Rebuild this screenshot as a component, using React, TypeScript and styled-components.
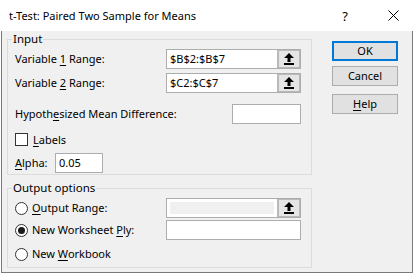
import React from 'react'
import styled, { createGlobalStyle } from 'styled-components'

const GlobalStyle = createGlobalStyle`
  html, body {
    margin: 0;
    padding: 0;
    background: #ffffff;
  }
  body {
    font-family: 'Noto Sans', 'Liberation Sans', sans-serif;
    font-size: 11px;
    color: #000000;
  }
  * {
    box-sizing: border-box;
  }
`

const UploadIcon = () => (
  <svg width='10' height='12' viewBox='0 0 10 12'>
    <path d='M5 0 L10 5 L6.5 5 L6.5 9 L3.5 9 L3.5 5 L0 5 Z' fill='#000' />
    <rect x='0' y='10' width='10' height='2' fill='#000' />
  </svg>
)

const CloseIcon = () => (
  <svg width='11' height='11' viewBox='0 0 11 11'>
    <path d='M0.5 0.5 L10.5 10.5 M10.5 0.5 L0.5 10.5' stroke='#000' strokeWidth='1' />
  </svg>
)

const RefEdit = ({ value }: { value?: string }) => (
  <RefBox>
    <RefText>{value}</RefText>
    <RefButton>
      <UploadIcon />
    </RefButton>
  </RefBox>
)

const App = () => {
  return (
    <>
      <GlobalStyle />
      <TitleBar>
        <Title>t-Test: Paired Two Sample for Means</Title>
        <TitleButton>?</TitleButton>
        <TitleButton $close>
          <CloseIcon />
        </TitleButton>
      </TitleBar>
      <Body>
        <LeftColumn>
          <Group>
            <Legend>Input</Legend>
            <Row>
              <Label>
                Variable <Key>1</Key> Range:
              </Label>
              <RefEdit value='$B$2:$B$7' />
            </Row>
            <Row $mt={4}>
              <Label>
                Variable <Key>2</Key> Range:
              </Label>
              <RefEdit value='$C2:$C$7' />
            </Row>
            <Row $mt={11}>
              <Label>
                Hypoth<Key>e</Key>sized Mean Difference:
              </Label>
              <TextBox $w={69} />
            </Row>
            <Row $mt={9} $h={13} $start>
              <CheckBox />
              <Label $ml={5}>
                <Key>L</Key>abels
              </Label>
            </Row>
            <Row $mt={7} $start>
              <Label $w={40}>
                <Key>A</Key>lpha:
              </Label>
              <TextBox $w={48}>0.05</TextBox>
            </Row>
          </Group>

          <Group $mt={6} $pb={3}>
            <Legend>Output options</Legend>
            <Row>
              <RadioLabel>
                <Radio />
                <Label $ml={4}>
                  <Key>O</Key>utput Range:
                </Label>
              </RadioLabel>
              <DisabledRef>
                <DisabledFill />
                <RefButton>
                  <UploadIcon />
                </RefButton>
              </DisabledRef>
            </Row>
            <Row $mt={2}>
              <RadioLabel>
                <Radio $checked />
                <Label $ml={4}>
                  New Worksheet <Key>P</Key>ly:
                </Label>
              </RadioLabel>
              <TextBox $w={135} />
            </Row>
            <Row $mt={4} $start>
              <RadioLabel>
                <Radio />
                <Label $ml={4}>
                  New <Key>W</Key>orkbook
                </Label>
              </RadioLabel>
            </Row>
          </Group>
        </LeftColumn>

        <ButtonColumn>
          <DialogButton $default>OK</DialogButton>
          <DialogButton $mt={5}>Cancel</DialogButton>
          <DialogButton $mt={8}>
            <Key>H</Key>elp
          </DialogButton>
        </ButtonColumn>
      </Body>
    </>
  )
}

export default App

const TitleBar = styled.div`
  display: flex;
  align-items: center;
  width: 415px;
  height: 31px;
  background: #ffffff;
`

const Title = styled.div`
  flex: 1;
  padding-left: 9px;
  font-size: 11px;
  line-height: 16px;
`

const TitleButton = styled.div<{ $close?: boolean }>`
  width: 46px;
  height: 31px;
  margin-right: ${({ $close }) => ($close ? '1px' : '0')};
  padding-left: ${({ $close }) => ($close ? '4px' : '0')};
  display: flex;
  align-items: center;
  justify-content: center;
  font-size: 13px;
`

const Body = styled.div`
  display: flex;
  margin-left: 1px;
  width: 412px;
  padding: 1px 0 4px 5px;
  gap: 20px;
  background: #f0f0f0;
  border: 1px solid #7a7a7a;
  border-top: none;
`

const LeftColumn = styled.div`
  display: flex;
  flex-direction: column;
  width: 305px;
`

const Group = styled.fieldset<{ $mt?: number; $pb?: number }>`
  margin: ${({ $mt }) => $mt ?? 0}px 0 0 0;
  padding: 3px 10px ${({ $pb }) => $pb ?? 1}px 7px;
  border: 1px solid #dcdcdc;
  min-width: 0;
  display: flex;
  flex-direction: column;
`

const Legend = styled.legend`
  padding: 0 1px;
  margin-left: -3px;
  line-height: 14px;
  font-size: 11.5px;
`

const Row = styled.div<{ $mt?: number; $h?: number; $start?: boolean }>`
  display: flex;
  align-items: center;
  justify-content: ${({ $start }) => ($start ? 'flex-start' : 'space-between')};
  height: ${({ $h }) => $h ?? 20}px;
  margin-top: ${({ $mt }) => $mt ?? 0}px;
`

const RadioLabel = styled.div`
  display: flex;
  align-items: center;
`

const Label = styled.span<{ $w?: number; $ml?: number }>`
  line-height: 16px;
  white-space: nowrap;
  margin-left: ${({ $ml }) => $ml ?? 0}px;
  width: ${({ $w }) => ($w ? `${$w}px` : 'auto')};
  flex: 0 0 auto;
`

const Key = styled.span`
  text-decoration: underline;
  text-underline-offset: 2px;
`

const RefBox = styled.div`
  display: flex;
  width: 135px;
  height: 20px;
  border: 1px solid #adadad;
  background: #ffffff;
`

const RefText = styled.div`
  flex: 1;
  padding-left: 3px;
  line-height: 18px;
`

const RefButton = styled.div`
  width: 23px;
  display: flex;
  align-items: center;
  justify-content: center;
  background: #e5e5e5;
  border: 1px solid #b9b9b9;
  border-left-width: 2px;
`

const DisabledRef = styled.div`
  display: flex;
  width: 135px;
  height: 20px;
  border: 1px solid #adadad;
  background: #ffffff;
`

const DisabledFill = styled.div`
  flex: 1;
  margin: 3px;
  background: #f0f0f0;
`

const TextBox = styled.div<{ $w: number }>`
  width: ${({ $w }) => $w}px;
  height: 20px;
  border: 1px solid #adadad;
  background: #ffffff;
  padding-left: 3px;
  line-height: 18px;
`

const CheckBox = styled.div`
  width: 13px;
  height: 13px;
  border: 1px solid #333333;
  background: #ffffff;
`

const Radio = styled.div<{ $checked?: boolean }>`
  width: 13px;
  height: 13px;
  border: 1px solid #333333;
  border-radius: 50%;
  background: #ffffff;
  display: flex;
  align-items: center;
  justify-content: center;

  &::after {
    content: '';
    display: ${({ $checked }) => ($checked ? 'block' : 'none')};
    width: 7px;
    height: 7px;
    border-radius: 50%;
    background: #1a1a1a;
  }
`

const ButtonColumn = styled.div`
  display: flex;
  flex-direction: column;
  padding-top: 9px;
`

const DialogButton = styled.div<{ $default?: boolean; $mt?: number }>`
  width: 66px;
  height: 20px;
  margin-top: ${({ $mt }) => $mt ?? 0}px;
  display: flex;
  align-items: center;
  justify-content: center;
  background: #e1e1e1;
  border: ${({ $default }) => ($default ? '2px solid #0078d7' : '1px solid #adadad')};
  line-height: 16px;
`
